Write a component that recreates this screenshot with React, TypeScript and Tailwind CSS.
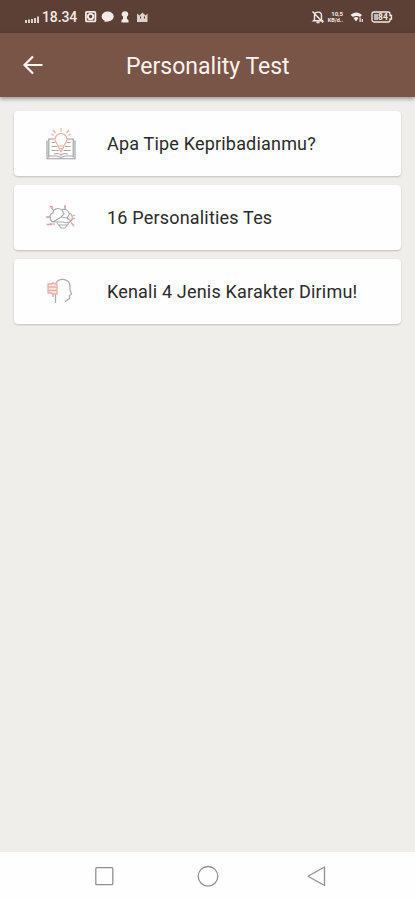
import React from "react";

function StatusBar() {
  return (
    <div className="flex h-[33px] items-center bg-[#5c4036] pl-6 pr-[22px] text-[#f3ebe5]">
      <svg className="h-4 w-[17px]" viewBox="0 0 17 16" fill="currentColor">
        <path d="M1 11h2v3H1zM4 10.500h2V14H4zM7 10h2v4H7zM10 9h2v5h-2zM13 7.500h2V14h-2z" opacity=".85" />
      </svg>
      <span className="ml-px w-[43px] text-[14px] font-medium leading-4 tracking-[-0.1px]">18.34</span>
      <svg className="h-4 w-[66px]" viewBox="0 0 66 16" fill="none" stroke="currentColor">
        <rect x=".9" y="2.900" width="9.500" height="9.500" rx="1" strokeWidth="1.800" />
        <circle cx="5.600" cy="7.600" r="2.700" strokeWidth="1.900" />
        <ellipse cx="22.700" cy="7.500" rx="6" ry="5" fill="currentColor" stroke="none" />
        <path d="M20 10l-.5 3 4.500-1z" fill="currentColor" stroke="none" />
        <path d="M40 2.300c4 0 4 4.700 2 5.200v2.500l1.500 1v2.500h-7V11l1.500-1V7.500c-2-.5-2-5.200 2-5.200z" fill="currentColor" stroke="none" />
        <path d="M52 4.500l2.500 2 3-3 3 3 2-2v8.500H52z" fill="currentColor" stroke="none" opacity=".85" />
        <path d="M55.500 7.500v2M59.500 7.500v2" stroke="#5c4036" />
      </svg>
      <div className="ml-auto flex items-center">
        <svg className="h-4 w-[15px]" viewBox="0 0 15 16" fill="none" stroke="currentColor" strokeWidth="1.400">
          <path d="M3.500 11V6.500c0-4.500 7-4.500 7 0V11l1 .800H2.500zM5.500 13.500h3M1.500 2.500l10.500 11" />
        </svg>
        <div className="flex w-[17px] flex-col items-end font-bold">
          <span className="text-[6px] leading-[7px]">10,5</span>
          <span className="whitespace-nowrap text-[5.5px] leading-[7px]">KB/d..</span>
        </div>
        <svg className="ml-[7px] h-4 w-[14px]" viewBox="0 0 14 16" fill="currentColor">
          <path d="M.5 6c3.500-3.500 8-3.500 11.500 0L10 8c-2-1.500-5-1.500-7 0zM3.500 9c2-1.500 3.500-1.500 5 0L6 12.500z" />
          <path d="M9.500 8.500h1.200V13H9.500zM11.700 10h1.200v3h-1.200z" />
        </svg>
        <svg className="ml-[7px] h-4 w-[22px]" viewBox="0 0 22 16" fill="none" stroke="currentColor">
          <path d="M3 3h14a2 2 0 0 1 2 2v1.500h1.500v3.500H19v1a2 2 0 0 1-2 2H3a2 2 0 0 1-2-2V5a2 2 0 0 1 2-2z" strokeWidth="1.300" />
          <rect x="3" y="5" width="4" height="6" fill="currentColor" stroke="none" opacity=".7" />
          <text x="7" y="11" fontSize="8.500" fontWeight="700" fill="currentColor" stroke="none">84</text>
        </svg>
      </div>
    </div>
  );
}

function BookIcon() {
  return (
    <svg className="h-8 w-8" viewBox="0 0 32 32" fill="none" strokeWidth="1.100">
      <g stroke="#9a9a9a">
        <path d="M9 11H3.800v18.500M22 11h6.200v18.500M2 12.500v18.300h28V12.500" />
        <path d="M4 28h8l4 1.500 4-1.500h8M9 26c3-1 5-1 7 1 2-2 4-2 7-1" stroke="#a6a6a6" />
        <path d="M6.500 14.500H10M6.500 18.500H12M6.500 22.500h7M22 14.500h3.500M20 18.500h5.500M18.500 22.500h7" stroke="#b5a6a0" />
      </g>
      <path d="M13 18c0-2-3-3.500-3-6.500a6 6 0 0 1 12 0c0 3-3 4.500-3 6.500l-3 6zM13 18h6M14 20.500h4M16 3.500V0M10.500 5L8 2M21.500 5L24 2M8.500 7.500L6.500 6M23.500 7.500l2-1.500" stroke="#e8b1a3" strokeWidth="1.200" />
    </svg>
  );
}

function BrainIcon() {
  return (
    <svg className="h-8 w-8" viewBox="0 0 32 32" fill="none" strokeWidth="1.100">
      <path d="M8 20c-4-2-4-8 0-9 0-4 5-6 9-3 3-2 6 0 7 3 4 1 4 6 2 8-2 2-5 2-8 1zM8 20l8-5 6 1 3-5M17 8l2 4-3 3M22 16l4 3M12 21l4 5h4l4-5M14 23h8M9 9L6 5.500M20 8V4M2 15h4M4 22h6" stroke="#a9abab" />
      <path d="M4.500 4.500H7l1 2M20 3v3.500M1 15h3M1.500 22.500H7M26 18l4-2M26 20.500l3 3.500M28 14l2-1" stroke="#e5a29b" strokeWidth="1.300" />
    </svg>
  );
}

function HeadIcon() {
  return (
    <svg className="h-8 w-8" viewBox="0 0 32 32" fill="none" strokeWidth="1.300">
      <path d="M11 7c4-6 14-4 14 3.500V14l1.500 4-2 1.500v3c-1 2-4 1-4 3.500M10.500 18v9M8 18v3" stroke="#acaeae" />
      <path d="M3 8h3.500l1-1 4.500 1v10H7.500l-1-1H3zM3 11h9M3 14.500h9" stroke="#edaaa5" fill="#fbe9e5" />
    </svg>
  );
}

const items = [
  { label: "Apa Tipe Kepribadianmu?", Icon: BookIcon },
  { label: "16 Personalities Tes", Icon: BrainIcon },
  { label: "Kenali 4 Jenis Karakter Dirimu!", Icon: HeadIcon },
];

export default function App() {
  return (
    <div className="flex h-[900px] w-[415px] flex-col overflow-hidden bg-[#efeeea] font-['Roboto',sans-serif]">
      <StatusBar />
      <header className="z-10 flex h-16 shrink-0 items-center bg-[#795548] pl-[21px] text-[#fbf3ee] shadow-[0_2px_4px_rgba(0,0,0,0.35)]">
        <svg className="h-6 w-6" viewBox="0 0 24 24" fill="none" stroke="currentColor" strokeWidth="2.200">
          <path d="M21.500 12H4M12 3.500L3.500 12l8.500 8.500" />
        </svg>
        <h1 className="ml-[81px] pt-[3px] text-[23px] leading-7">Personality Test</h1>
      </header>
      <main className="flex flex-1 flex-col gap-[9px] px-3.5 pt-3.5">
        {items.map(({ label, Icon }) => (
          <div key={label} className="flex h-[65px] items-center rounded-[4px] bg-[#fefefe] pl-[31px] shadow-[0_1px_2px_rgba(0,0,0,0.2)]">
            <Icon />
            <span className="ml-[30px] whitespace-nowrap text-[18px] leading-6 tracking-[0.19px] text-[#2a2a2a]">{label}</span>
          </div>
        ))}
      </main>
      <nav className="h-12 shrink-0 bg-[#fefefe]">
        <svg className="h-12 w-full" viewBox="0 0 415 48" fill="none" stroke="#909090" strokeWidth="1.300">
          <rect x="95.800" y="15.700" width="17" height="17" rx="1" />
          <circle cx="208" cy="24.300" r="9.800" />
          <path d="M324.500 15v18.500L308 24.300z" strokeLinejoin="round" />
        </svg>
      </nav>
    </div>
  );
}
